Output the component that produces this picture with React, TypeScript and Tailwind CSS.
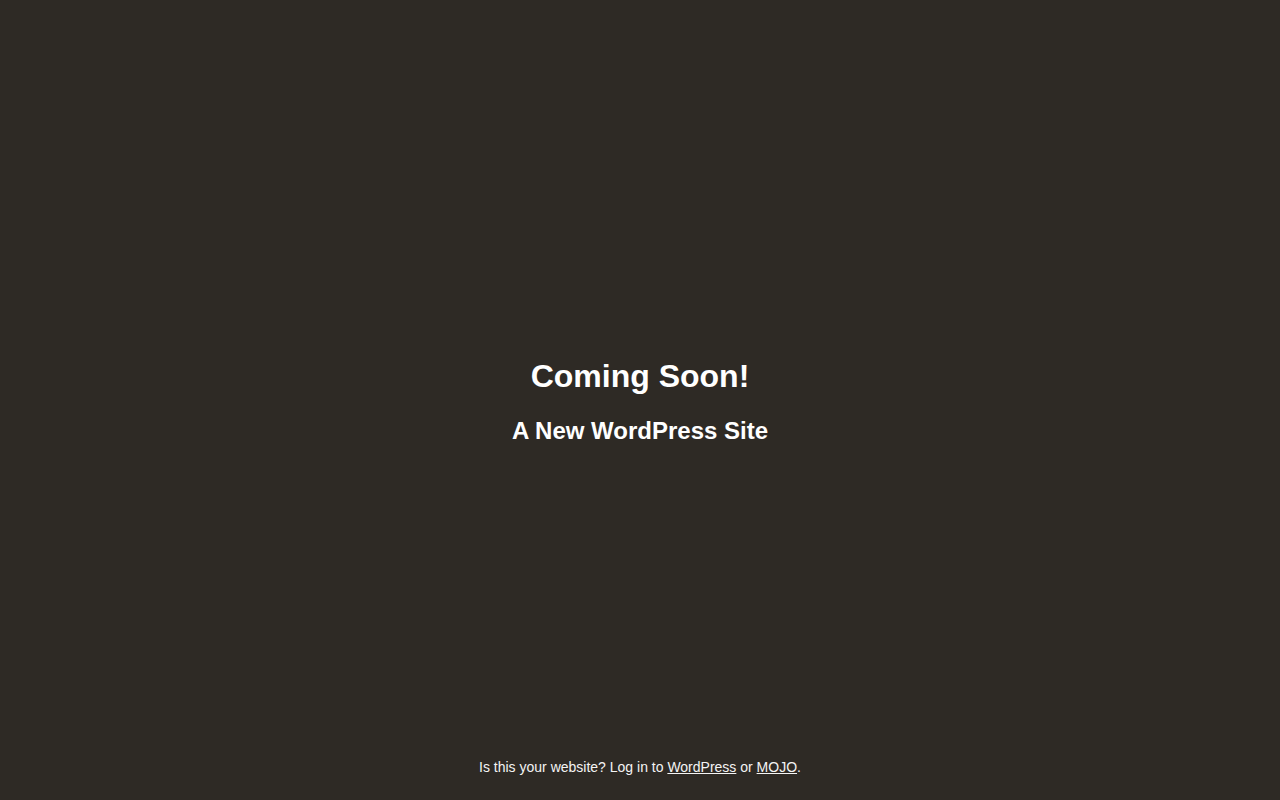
export default function App() {
  return (
    <div
      className="h-screen flex flex-col bg-[#2e2a25] text-white"
      style={{ fontFamily: '"Liberation Sans", Arial, sans-serif' }}
    >
      <main className="flex-1 flex flex-col items-center justify-center pt-[44px]">
        <h1 className="text-[32px] leading-[37px] font-bold">Coming Soon!</h1>
        <h2 className="mt-[22px] text-[24px] leading-[28px] font-bold">A New WordPress Site</h2>
      </main>
      <footer className="pb-[25px] text-center text-[14px] leading-[16px] text-[#f4f4f4]">
        Is this your website? Log in to{" "}
        <a href="#" className="underline">WordPress</a> or{" "}
        <a href="#" className="underline">MOJO</a>.
      </footer>
    </div>
  );
}
